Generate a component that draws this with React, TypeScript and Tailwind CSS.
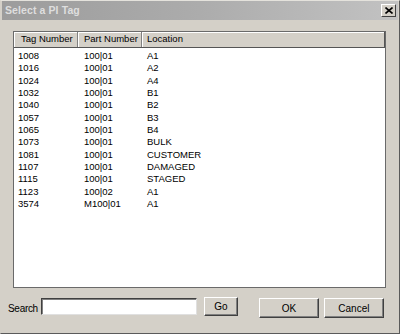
import React from "react";

const rows = [
  ["1008", "100|01", "A1"],
  ["1016", "100|01", "A2"],
  ["1024", "100|01", "A4"],
  ["1032", "100|01", "B1"],
  ["1040", "100|01", "B2"],
  ["1057", "100|01", "B3"],
  ["1065", "100|01", "B4"],
  ["1073", "100|01", "BULK"],
  ["1081", "100|01", "CUSTOMER"],
  ["1107", "100|01", "DAMAGED"],
  ["1115", "100|01", "STAGED"],
  ["1123", "100|02", "A1"],
  ["3574", "M100|01", "A1"]
];

const font = { fontFamily: '"Liberation Sans", Arial, sans-serif' };

function Btn({ label, cls }: { label: string; cls: string }) {
  return (
    <button
      className={`bg-[#d4d0c8] border border-t-white border-l-white border-r-[#404040] border-b-[#404040] shadow-[inset_-1px_-1px_0_#808080] text-[10px] text-black flex items-center justify-center ${cls}`}
    >
      {label}
    </button>
  );
}

export default function App() {
  return (
    <div
      className="w-[400px] h-[334px] bg-[#d4d0c8] flex flex-col border border-t-[#e4e2dc] border-l-[#d4d0c8] border-r-[#5a5a5a] border-b-[#5a5a5a] overflow-hidden"
      style={font}
    >
      {/* Title bar */}
      <div className="h-[19px] mx-[1px] flex items-center justify-between bg-gradient-to-r from-[#9c9c9c] via-[#acacac] to-[#c2c2c2] pl-[3px] pr-[2px]">
        <span className="text-[10.5px] font-bold text-[#dedede] tracking-[0.1px]">Select a PI Tag</span>
        <div className="w-[15px] h-[13px] bg-[#d4d0c8] border border-t-white border-l-white border-r-[#404040] border-b-[#404040] flex items-center justify-center">
          <svg width="8" height="7" viewBox="0 0 8 7">
            <path d="M0.5 0.5 L7.5 6.5 M7.5 0.5 L0.5 6.5" stroke="#000" strokeWidth="1.6" />
          </svg>
        </div>
      </div>

      {/* List */}
      <div className="mt-[11px] ml-[12px] w-[373px] h-[257px] bg-white border border-[#6a6a6a] flex flex-col">
        <div className="h-[16px] grid grid-cols-[64px_64px_1fr] bg-[#d4d0c8] border-b border-[#555] text-[9.5px] text-black">
          <div className="pl-[7px] flex items-center border-r border-[#808080] shadow-[inset_1px_1px_0_white]">Tag Number</div>
          <div className="pl-[6px] flex items-center border-r border-[#808080] shadow-[inset_1px_1px_0_white]">Part Number</div>
          <div className="pl-[5px] flex items-center shadow-[inset_1px_1px_0_white] border-r border-[#555]">Location</div>
        </div>
        <div className="pt-[2px] text-[9.5px] text-black">
          {rows.map(([t, p, l]) => (
            <div key={t} className="h-[12.33px] leading-[12.33px] grid grid-cols-[64px_64px_1fr]">
              <div className="pl-[4px]">{t}</div>
              <div className="pl-[6px]">{p}</div>
              <div className="pl-[5px]">{l}</div>
            </div>
          ))}
        </div>
      </div>

      {/* Footer */}
      <div className="mt-[9px] flex items-start">
        <span className="ml-[7px] mt-[4px] text-[10px] text-black tracking-[-0.3px]">Search</span>
        <div className="ml-[3px] mt-[1px] w-[156px] h-[17px] bg-white border border-t-[#404040] border-l-[#404040] border-r-[#e0e0e0] border-b-[#e0e0e0] shadow-[inset_1px_1px_0_#808080]" />
        <Btn label="Go" cls="ml-[7px] w-[34px] h-[19px]" />
        <Btn label="OK" cls="ml-[21px] mt-[1px] w-[60px] h-[20px]" />
        <Btn label="Cancel" cls="ml-[5px] mt-[1px] w-[60px] h-[20px]" />
      </div>
    </div>
  );
}
